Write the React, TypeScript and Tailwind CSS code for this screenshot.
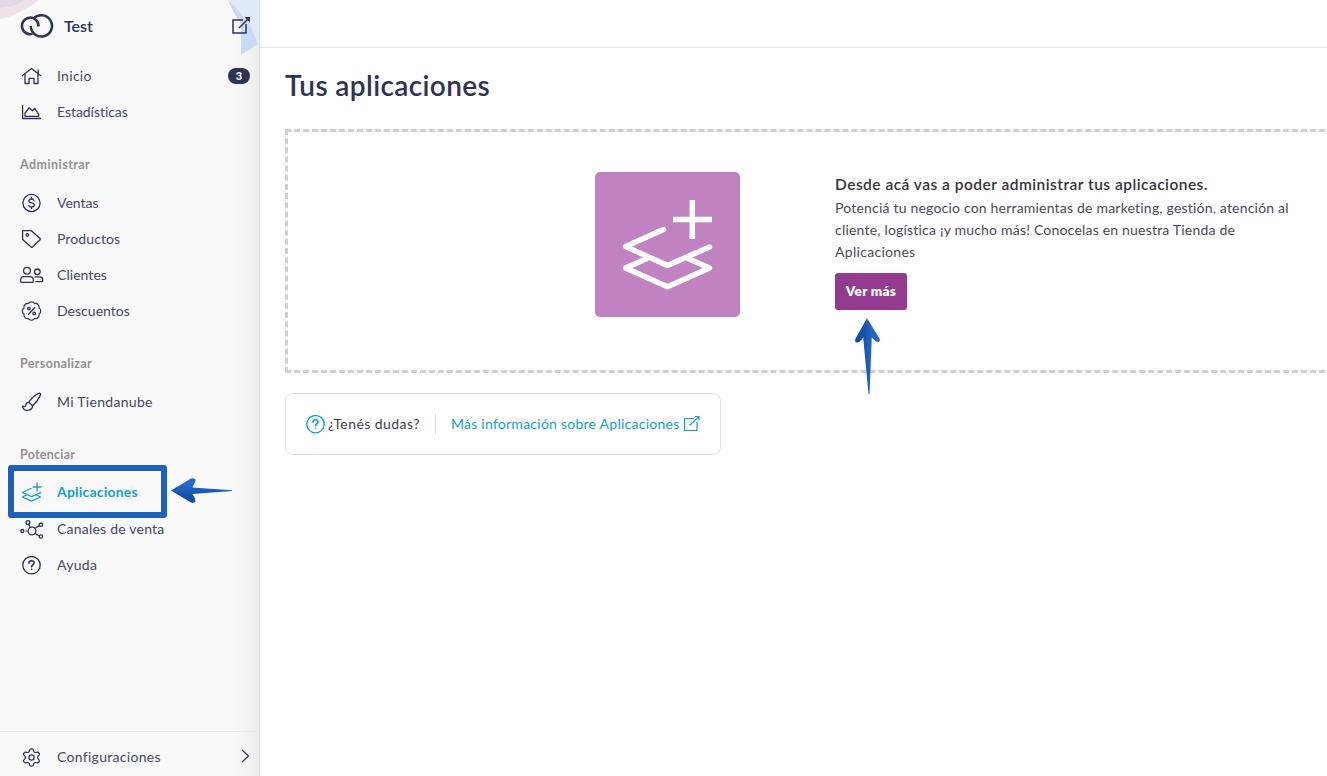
import React from "react";
import { Settings } from "lucide-react";

type IconProps = { children: React.ReactNode; className?: string };

const Icon = ({ children, className = "" }: IconProps) => (
  <svg
    viewBox="0 0 24 24"
    className={`size-6 shrink-0 ${className}`}
    fill="none"
    stroke="currentColor"
    strokeWidth="1.3"
    strokeLinecap="round"
    strokeLinejoin="round"
  >
    {children}
  </svg>
);

const HomeIcon = () => (
  <Icon>
    <path d="M2.5 11.5 11.5 4.5l9 7M18.2 6v3.5M5 10v9.5h4v-5.2h5v5.2h4V10" />
  </Icon>
);

const StatsIcon = () => (
  <Icon>
    <path d="M2.6 5.5v13h18" />
    <path d="M5 16.3V13l4.1-5.2 3.2 3 2.4-2.4 3.9 5.8v2.1Z" />
  </Icon>
);

const SalesIcon = () => (
  <Icon>
    <circle cx="11.5" cy="12" r="8.6" />
    <path d="M14 9.6c-.3-1-1.3-1.6-2.5-1.6-1.5 0-2.6.7-2.6 1.9 0 2.9 5.3 1.2 5.3 4.1 0 1.2-1.2 2-2.7 2-1.4 0-2.5-.7-2.7-1.7M11.5 6.3V8M11.5 16v1.7" />
  </Icon>
);

const TagIcon = () => (
  <Icon>
    <path d="M2.6 4.5q0-.8.8-.8h8l8.6 7.8q.6.6 0 1.2l-7.4 7.3q-.7.7-1.4 0L2.6 12.6Z" />
    <circle cx="7.3" cy="7.9" r="1.2" />
  </Icon>
);

const ClientsIcon = () => (
  <Icon>
    <circle cx="7" cy="7.7" r="3.4" />
    <path d="M.7 18.5v-1.7q0-3.2 3.3-3.2h6q3.3 0 3.3 3.2v1.7q0 .9-.9.9H1.6q-.9 0-.9-.9Z" />
    <circle cx="17.3" cy="8.8" r="2.8" />
    <path d="M15.3 13.9h4.6q2.8 0 2.8 2.8v1.2q0 .8-.8.8h-6.1" />
  </Icon>
);

const DiscountIcon = () => (
  <Icon>
    <g transform="translate(.5 1) scale(.92)">
      <path d="M3.85 8.62a4 4 0 0 1 4.78-4.77 4 4 0 0 1 6.74 0 4 4 0 0 1 4.78 4.78 4 4 0 0 1 0 6.74 4 4 0 0 1-4.77 4.78 4 4 0 0 1-6.75 0 4 4 0 0 1-4.78-4.77 4 4 0 0 1 0-6.76Z" />
    </g>
    <path d="m14.7 8.8-6.2 6.4" />
    <circle cx="8.9" cy="9.6" r="1.3" />
    <circle cx="14.2" cy="14.4" r="1.3" />
  </Icon>
);

const BrushIcon = () => (
  <Icon>
    <path d="M8.8 12.2c2.8-4.1 6.7-7.4 9.9-8.8 1.5-.5 2.2.3 1.7 1.6-1.4 3.6-4.2 7.6-7.8 10.7Z" />
    <path d="M8.8 12.4c-2.2.2-3.1 1.6-3.1 3.2-.4 1-1.8 1.4-3.2.4.3 2.8 2.5 4.5 5.1 4.3 2.9-.2 5-2.1 4.9-4.7" />
  </Icon>
);

const AppsIcon = () => (
  <Icon className="-mt-0.5">
    <path d="m11 8.5-8.7 4 9.3 4.2 9-4M6.6 15l-4.3 2 9.3 4.2 9-4.2-4.2-2M17 3v8M13 7h8" />
  </Icon>
);

const ChannelsIcon = () => (
  <Icon>
    <circle cx="12" cy="14" r="3.9" />
    <circle cx="2.3" cy="14" r="1.5" />
    <circle cx="8" cy="5.5" r="1.9" />
    <circle cx="20.9" cy="7.7" r="1.7" />
    <circle cx="20.9" cy="19.5" r="1.7" />
    <path d="M8.8 7.4 10.2 10.4M14.9 11.3l4.5-2.7M14.9 16.5l4.4 2.4M6 14h.4" />
  </Icon>
);

const HelpIcon = ({ className = "" }: { className?: string }) => (
  <Icon className={className}>
    <circle cx="11.5" cy="12.2" r="8.7" />
    <path strokeWidth="1.6" d="M9 10.2c0-1.5 1.1-2.4 2.5-2.4s2.5.9 2.5 2.2c0 1.8-2.4 1.9-2.4 3.7M11.6 16.2v.1" />
  </Icon>
);

const LayersPlus = () => (
  <svg viewBox="0 0 145 145" className="size-[145px]" fill="none" stroke="#fff" strokeWidth="5.5" strokeLinecap="round" strokeLinejoin="round">
    <path d="M68.5 57.5 30.5 74.5l42 19L114.5 75M52 86.5 30.5 96l42 18.7L114.5 96 93 86.5" />
    <path strokeLinecap="butt" d="M97.3 28v39M78 47.5h39" />
  </svg>
);

type ItemProps = { icon: React.ReactNode; label: string; tracking: string; badge?: string; active?: boolean };

const Item = ({ icon, label, tracking, badge, active }: ItemProps) => (
  <a className={`flex h-9 items-center gap-[13px] pl-5 pr-[9px] text-sm ${active ? "font-bold text-[#0f9fdb]" : "text-[#2c3357]"}`}>
    {icon}
    <span className={`${tracking} ${active ? "-mt-0.5" : "text-[#434967]"}`}>{label}</span>
    {badge && (
      <span className="ml-auto flex h-4 w-[22px] items-center justify-center rounded-full bg-[#2c3357] text-[11px] font-black text-white">
        {badge}
      </span>
    )}
  </a>
);

const Section = ({ label, tracking }: { label: string; tracking: string }) => (
  <h2 className={`mt-[25px] mb-2.5 pl-5 text-[12.5px] leading-5 font-bold text-[#959090] ${tracking}`}>{label}</h2>
);

const Sidebar = () => (
  <aside className="relative flex w-[260px] shrink-0 flex-col border-r border-[#dedede] bg-[linear-gradient(to_right,#f9f9f9_235px,#ececec_259px)]">
    <svg className="absolute top-0 left-0 h-14 w-[259px]" viewBox="0 0 259 56">
      <path d="M0 0h38Q34 5 23 10 11 17 0 19Z" fill="#eee2e8" />
      <path d="M0 0h24L16 5 8 7 0 8Z" fill="#e0d8e4" />
      <path d="M228 0h31v44l-9-16-8-8Z" fill="#e0e9f6" />
      <path d="M228 0c4 10 9 18 13 24v31l17-11-8-19-13-16Z" fill="#c8daf5" />
    </svg>
    <div className="relative flex h-[58px] items-center pb-[7px] pl-5 pr-2">
      <svg viewBox="0 0 34 26" className="h-[26px] w-[34px]" fill="none" stroke="#2c3357" strokeWidth="2.5">
        <path d="M18.5 13.5a8.3 8.3 0 1 0-6 7.4" />
        <path d="M10.8 13a10.6 10.6 0 1 0 2.5-6.9" />
      </svg>
      <span className="ml-2.5 text-base font-semibold text-[#2c3357]">Test</span>
      <svg viewBox="0 0 20 20" className="ml-auto size-5" fill="none" stroke="#2c3357" strokeWidth="1.5">
        <path d="M12 4H2v13h13V8M8 12 18 2" />
        <path d="M13.5 1H19v5.5Z" fill="#2c3357" stroke="none" />
      </svg>
    </div>
    <nav className="relative">
      <Item icon={<HomeIcon />} label="Inicio" tracking="tracking-[0.3px]" badge="3" />
      <Item icon={<StatsIcon />} label="Estadísticas" tracking="tracking-[-0.05px]" />
      <Section label="Administrar" tracking="tracking-[0.45px]" />
      <Item icon={<SalesIcon />} label="Ventas" tracking="tracking-normal" />
      <Item icon={<TagIcon />} label="Productos" tracking="tracking-[0.1px]" />
      <Item icon={<ClientsIcon />} label="Clientes" tracking="tracking-[0.05px]" />
      <Item icon={<DiscountIcon />} label="Descuentos" tracking="tracking-[0.03px]" />
      <Section label="Personalizar" tracking="tracking-[0.35px]" />
      <Item icon={<BrushIcon />} label="Mi Tiendanube" tracking="tracking-[0.3px]" />
      <Section label="Potenciar" tracking="tracking-[0.25px]" />
      <div className="relative">
        <Item icon={<AppsIcon />} label="Aplicaciones" tracking="tracking-[0.2px]" active />
        <div className="absolute -top-2.5 left-2 h-[53px] w-[159px] rounded-[3px] border-[6px] border-[#1e62be]" />
        <svg viewBox="0 0 64 28" className="absolute top-[2px] left-[170px] h-7 w-16">
          <path d="M1 13.5 20.5 1.8Q23.5.3 25.3 2.5 26 4.500 24.5 6L22.5 10.500 62 13.2V14L22.5 17l2.5 4.500Q26 24 24.5 25.3 23 26.500 20.5 25.3Z" fill="url(#arrow-left)" />
          <defs>
            <linearGradient id="arrow-left" x1="0" y1="0" x2="0" y2="1">
              <stop offset=".3" stopColor="#2468c6" />
              <stop offset=".7" stopColor="#1250a8" />
            </linearGradient>
          </defs>
        </svg>
      </div>
      <Item icon={<ChannelsIcon />} label="Canales de venta" tracking="tracking-[0.22px]" />
      <Item icon={<HelpIcon />} label="Ayuda" tracking="tracking-[0.3px]" />
    </nav>
    <div className="mt-auto flex h-[45px] items-center border-t border-[#ebebeb] pt-1.5 pr-[9px] pl-[21px] text-sm text-[#2c3357]">
      <Settings size={21} strokeWidth={1.4} />
      <span className="ml-[15px] tracking-[0.3px] text-[#434967]">Configuraciones</span>
      <svg viewBox="0 0 10 14" className="mb-0.5 ml-auto h-3.5 w-2.5" fill="none" stroke="currentColor" strokeWidth="1.2">
        <path d="m2 1 6.5 6L2 13" />
      </svg>
    </div>
  </aside>
);

const App = () => {
  return (
    <div className="flex h-screen w-screen overflow-hidden bg-white font-['Lato',sans-serif]">
      <Sidebar />
      <main className="min-w-0 flex-1 overflow-hidden">
        <div className="h-12 border-b border-[#e4e4e4]" />
        <div className="pt-[19px] pl-[25px]">
          <h1 className="h-[62px] text-[28px] leading-9 font-semibold tracking-[0.38px] text-[#2c3357]">Tus aplicaciones</h1>
          {/* wider than the window, the right border is cut off */}
          <section className="flex h-[244px] w-[1085px] border-[3px] border-dashed border-[#cfcfcf] pt-10 pl-[307px]">
            <div className="size-[145px] shrink-0 rounded-[5px] bg-[#c082c0]">
              <LayersPlus />
            </div>
            <div className="relative ml-[95px] w-[480px]">
              <h3 className="-mt-px text-[15.5px] leading-[26px] font-semibold tracking-[0.48px] text-[#363438]">
                Desde acá vas a poder administrar tus aplicaciones.
              </h3>
              <p className="text-sm leading-[22px] tracking-[0.2px] whitespace-nowrap text-[#4c4858]">
                Potenciá tu negocio con herramientas de marketing, gestión, atención al
                <br />
                cliente, logística ¡y mucho más! Conocelas en nuestra Tienda de
                <br />
                <span className="tracking-[0.3px]">Aplicaciones</span>
              </p>
              <button className="mt-2.5 h-[37px] w-[72px] rounded-[3px] bg-[#923b8f] text-[13.5px] font-extrabold tracking-[0.3px] text-white">Ver más</button>
              <svg viewBox="0 0 28 80" className="absolute top-[145px] left-[18px] h-20 w-7">
                <path d="M14 1.3 26.5 21.5Q27.5 24 25.5 25 23.5 25.5 21.5 23L18.8 20.5 16.5 77H15.5L10.2 20.5 7.5 24Q4.5 26.5 2.5 25 1.5 23.5 2.5 21.5Z" fill="url(#arrow-up)" />
                <defs>
                  <linearGradient id="arrow-up" x1="0" y1="0" x2="1" y2="0">
                    <stop offset=".3" stopColor="#1250a8" />
                    <stop offset=".7" stopColor="#2468c6" />
                  </linearGradient>
                </defs>
              </svg>
            </div>
          </section>
          <div className="mt-5 flex h-[62px] w-[436px] items-center rounded-lg border border-[#e2e2e2] pl-[18px] text-sm text-[#403c4c]">
            <HelpIcon className="text-[#0f9fdb]" />
            <span className="tracking-[0.43px]">¿Tenés dudas?</span>
            <span className="mx-[15px] h-5 w-px bg-[#dcdcdc]" />
            <span className="tracking-[0.25px] text-[#0f9fdb]">Más información sobre Aplicaciones</span>
            <svg viewBox="0 0 18 18" className="ml-1 size-[18px]" fill="none" stroke="#0f9fdb" strokeWidth="1.2">
              <path d="M11 3.5H1.5v12H14V7M6.5 10.5 16 1.5M12 1.5h4V5" />
            </svg>
          </div>
        </div>
      </main>
    </div>
  );
};

export default App;
